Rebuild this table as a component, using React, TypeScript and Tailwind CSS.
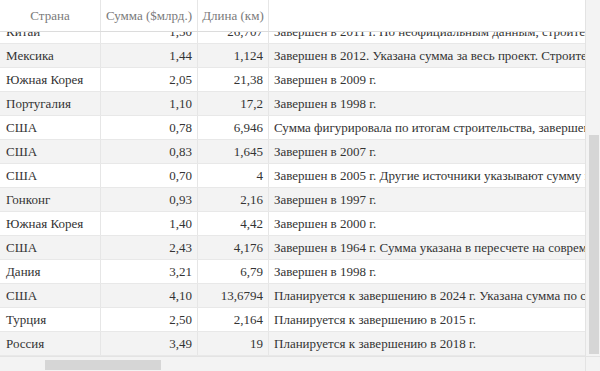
import React from 'react';

interface Row {
   country: string;
   sum: string;
   length: string;
   note: string;
}

const rows: Row[] = [
   { country: 'Китай', sum: '1,50', length: '26,707', note: 'Завершен в 2011 г. По неофициальным данным, строительство обошлось значительно дороже.' },
   { country: 'Мексика', sum: '1,44', length: '1,124', note: 'Завершен в 2012. Указана сумма за весь проект. Строительство моста заняло четыре года.' },
   { country: 'Южная Корея', sum: '2,05', length: '21,38', note: 'Завершен в 2009 г.' },
   { country: 'Португалия', sum: '1,10', length: '17,2', note: 'Завершен в 1998 г.' },
   { country: 'США', sum: '0,78', length: '6,946', note: 'Сумма фигурировала по итогам строительства, завершенного в 2013 г.' },
   { country: 'США', sum: '0,83', length: '1,645', note: 'Завершен в 2007 г.' },
   { country: 'США', sum: '0,70', length: '4', note: 'Завершен в 2005 г. Другие источники указывают сумму в 0,8 млрд.' },
   { country: 'Гонконг', sum: '0,93', length: '2,16', note: 'Завершен в 1997 г.' },
   { country: 'Южная Корея', sum: '1,40', length: '4,42', note: 'Завершен в 2000 г.' },
   { country: 'США', sum: '2,43', length: '4,176', note: 'Завершен в 1964 г. Сумма указана в пересчете на современные цены.' },
   { country: 'Дания', sum: '3,21', length: '6,79', note: 'Завершен в 1998 г.' },
   { country: 'США', sum: '4,10', length: '13,6794', note: 'Планируется к завершению в 2024 г. Указана сумма по состоянию на сегодня.' },
   { country: 'Турция', sum: '2,50', length: '2,164', note: 'Планируется к завершению в 2015 г.' },
   { country: 'Россия', sum: '3,49', length: '19', note: 'Планируется к завершению в 2018 г.' },
];

export default function App() {
   return (
      <div className="w-[600px] h-[371px] flex flex-col bg-white overflow-hidden font-[family-name:'Liberation_Serif',serif] text-[13px] text-[#333]">
         <div className="flex flex-1 min-h-0">
            <div className="flex-1 min-w-0 flex flex-col overflow-hidden">
               <div className="flex h-[32px] shrink-0 border-b border-[#dcdcdc] text-[#7a7a7a]">
                  <div className="w-[101px] shrink-0 flex items-center justify-center border-r border-[#e6e6e6]">Страна</div>
                  <div className="w-[97px] shrink-0 flex items-center justify-center border-r border-[#e6e6e6] whitespace-nowrap">Сумма ($млрд.)</div>
                  <div className="w-[71px] shrink-0 flex items-center justify-center border-r border-[#e6e6e6] whitespace-nowrap">Длина (км)</div>
                  <div className="flex-1" />
               </div>
               <div className="flex-1 min-h-0 overflow-hidden">
                  <div className="-mt-[12px]">
                     {rows.map((row, i) => (
                        <div
                           key={i}
                           className={`flex h-[24px] border-b border-[#e8e8e8] ${i % 2 === 1 ? 'bg-[#f3f3f3]' : 'bg-white'}`}
                        >
                           <div className="w-[101px] shrink-0 flex items-center px-[6px] border-r border-[#e6e6e6] whitespace-nowrap">
                              {row.country}
                           </div>
                           <div className="w-[97px] shrink-0 flex items-center justify-end px-[5px] border-r border-[#e6e6e6]">
                              {row.sum}
                           </div>
                           <div className="w-[71px] shrink-0 flex items-center justify-end px-[5px] border-r border-[#e6e6e6]">
                              {row.length}
                           </div>
                           <div className="flex-1 min-w-0 flex items-center pl-[5px] whitespace-nowrap overflow-hidden">
                              {row.note}
                           </div>
                        </div>
                     ))}
                  </div>
               </div>
            </div>
            <div className="w-[15px] shrink-0 relative bg-[#f3f3f3] border-l border-[#e3e3e3]">
               <div className="absolute left-[3px] w-[10px] top-[135px] bottom-[2px] bg-[#d6d6d6]" />
            </div>
         </div>
         <div className="h-[15px] shrink-0 flex border-t border-[#e3e3e3]">
            <div className="flex-1 relative bg-[#f3f3f3]">
               <div className="absolute left-[45px] w-[116px] top-[3px] h-[10px] bg-[#d6d6d6]" />
            </div>
            <div className="w-[15px] shrink-0 bg-[#f3f3f3] border-l border-[#e3e3e3]" />
         </div>
      </div>
   );
}
